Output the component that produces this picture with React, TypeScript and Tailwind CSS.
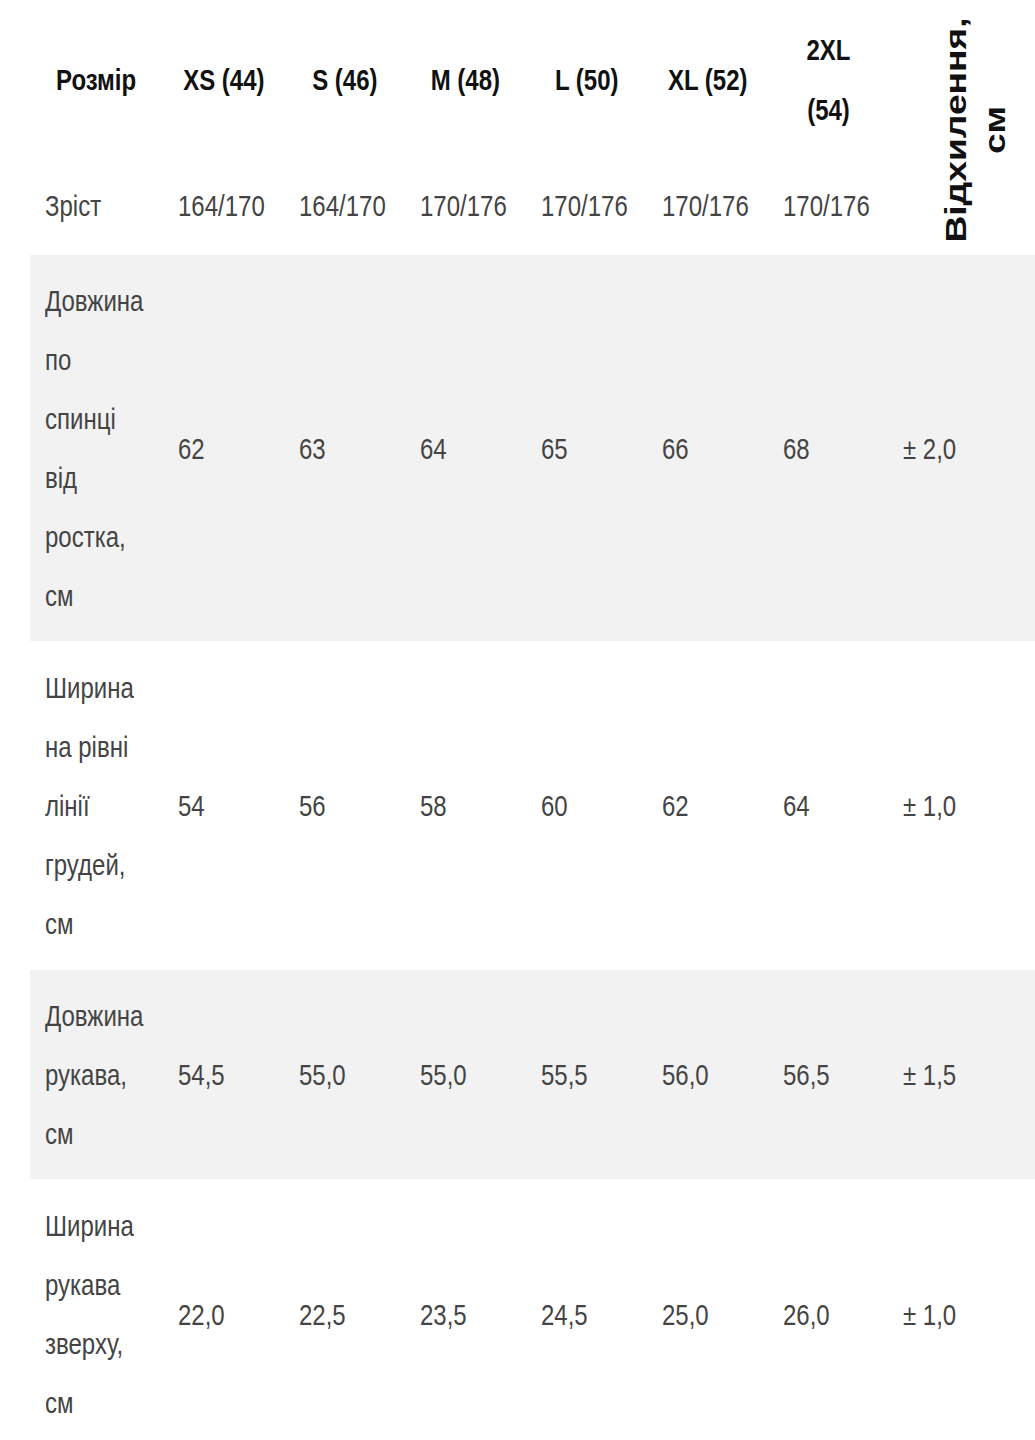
import React from "react";

const sizes = ["XS (44)", "S (46)", "M (48)", "L (50)", "XL (52)"];
const heights = ["164/170", "164/170", "170/176", "170/176", "170/176", "170/176"];

const rows = [
  {
    label: ["Довжина", "по", "спинці", "від", "ростка,", "см"],
    values: ["62", "63", "64", "65", "66", "68"],
    dev: "± 2,0",
    height: "h-[386px]",
    shaded: true,
  },
  {
    label: ["Ширина", "на рівні", "лінії", "грудей,", "см"],
    values: ["54", "56", "58", "60", "62", "64"],
    dev: "± 1,0",
    height: "h-[329px]",
    shaded: false,
  },
  {
    label: ["Довжина", "рукава,", "см"],
    values: ["54,5", "55,0", "55,0", "55,5", "56,0", "56,5"],
    dev: "± 1,5",
    height: "h-[209px]",
    shaded: true,
  },
  {
    label: ["Ширина", "рукава", "зверху,", "см"],
    values: ["22,0", "22,5", "23,5", "24,5", "25,0", "26,0"],
    dev: "± 1,0",
    height: "h-[270px]",
    shaded: false,
  },
];

const cols = "grid grid-cols-[133px_repeat(6,121px)_minmax(0,1fr)]";

// Narrow text: the table reads as horizontally squeezed
function Narrow({ children, center }: { children: React.ReactNode; center?: boolean }) {
  return (
    <div
      className={`whitespace-nowrap scale-x-[0.8] ${center ? "origin-center text-center" : "origin-left"}`}
    >
      {children}
    </div>
  );
}

export default function App() {
  return (
    <div
      className="min-h-[1440px] bg-white pl-[30px] text-[30px] text-[#444]"
      style={{ fontFamily: '"Liberation Sans", Arial, sans-serif' }}
    >
      {/* Header */}
      <div className={`${cols} grid-rows-[152px_99px] pt-[4px]`}>
        <div className="flex items-center justify-center font-bold leading-[60px] text-[#111]">
          <Narrow center>Розмір</Narrow>
        </div>
        {sizes.map((s) => (
          <div
            key={s}
            className="flex items-center justify-center font-bold leading-[60px] text-[#111]"
          >
            <Narrow center>{s}</Narrow>
          </div>
        ))}
        <div className="flex items-center justify-center font-bold leading-[60px] text-[#111]">
          <Narrow center>
            2XL
            <br />
            (54)
          </Narrow>
        </div>
        <div className="row-span-2 flex items-center justify-center pl-[26px]">
          <div className="whitespace-nowrap text-center font-bold leading-[39px] text-[#111] -rotate-90 scale-x-[1.24]">
            Відхилення,
            <br />
            см
          </div>
        </div>

        <div className="flex items-center pl-[15px] leading-[59px]">
          <Narrow>Зріст</Narrow>
        </div>
        {heights.map((h, i) => (
          <div key={i} className="flex items-center pl-[15px] leading-[59px]">
            <Narrow>{h}</Narrow>
          </div>
        ))}
      </div>

      {/* Body */}
      {rows.map((row, r) => (
        <div
          key={r}
          className={`${cols} ${row.height} ${row.shaded ? "bg-[#f2f2f2]" : "bg-white"}`}
        >
          <div className="flex items-center pl-[15px] leading-[59px]">
            <Narrow>
              {row.label.map((line, i) => (
                <div key={i}>{line}</div>
              ))}
            </Narrow>
          </div>
          {row.values.map((v, i) => (
            <div key={i} className="flex items-center pl-[15px] leading-[59px]">
              <Narrow>{v}</Narrow>
            </div>
          ))}
          <div className="flex items-center pl-[14px] leading-[59px]">
            <Narrow>{row.dev}</Narrow>
          </div>
        </div>
      ))}
    </div>
  );
}
